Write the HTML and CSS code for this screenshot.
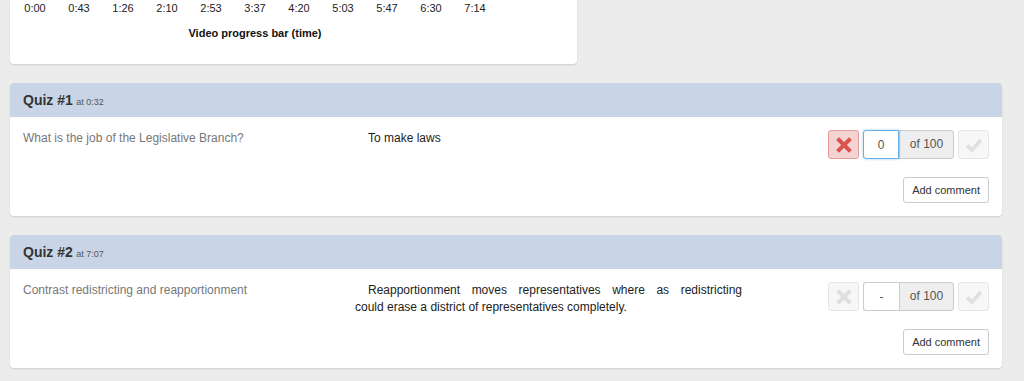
FILE: index.html
```html
<!DOCTYPE html>
<html lang="en">
<head>
    <meta charset="UTF-8">
    <title>Quiz grading</title>
    <link rel="stylesheet" href="styles.css">
</head>
<body>

    <!-- Video timeline -->
    <div class="timeline-card">
        <div class="timeline">
            <div class="ticks">
                <span>0:00</span><span>0:43</span><span>1:26</span><span>2:10</span>
                <span>2:53</span><span>3:37</span><span>4:20</span><span>5:03</span>
                <span>5:47</span><span>6:30</span><span>7:14</span>
            </div>
            <div class="timeline-label">Video progress bar (time)</div>
        </div>
    </div>

    <!-- Quiz #1 -->
    <section class="quiz">
        <div class="quiz-head"><b>Quiz #1</b> <small>at 0:32</small></div>
        <div class="quiz-body">
            <div class="question">What is the job of the Legislative Branch?</div>
            <div class="answer">
                <div class="first">To make laws</div>
            </div>
            <div class="grading">
                <div class="controls">
                    <button class="btn-icon wrong active">
                        <svg width="16" height="16" viewBox="0 0 16 16"><path d="M3 3 L13 13 M13 3 L3 13" stroke="currentColor" stroke-width="4" stroke-linecap="square"/></svg>
                    </button>
                    <div class="score">
                        <input class="focus" type="text" value="0">
                        <span class="addon">of 100</span>
                    </div>
                    <button class="btn-icon right">
                        <svg width="18" height="16" viewBox="0 0 18 16"><path d="M2 8.5 L7 13 L16 3" fill="none" stroke="currentColor" stroke-width="4"/></svg>
                    </button>
                </div>
                <button class="comment">Add comment</button>
            </div>
        </div>
    </section>

    <!-- Quiz #2 -->
    <section class="quiz">
        <div class="quiz-head"><b>Quiz #2</b> <small>at 7:07</small></div>
        <div class="quiz-body">
            <div class="question">Contrast redistricting and reapportionment</div>
            <div class="answer">
                <div class="first spread">Reapportionment moves representatives where as redistricting</div>
                <div>could erase a district of representatives completely.</div>
            </div>
            <div class="grading">
                <div class="controls">
                    <button class="btn-icon wrong">
                        <svg width="16" height="16" viewBox="0 0 16 16"><path d="M3 3 L13 13 M13 3 L3 13" stroke="currentColor" stroke-width="4" stroke-linecap="square"/></svg>
                    </button>
                    <div class="score">
                        <input type="text" value="-">
                        <span class="addon">of 100</span>
                    </div>
                    <button class="btn-icon right">
                        <svg width="18" height="16" viewBox="0 0 18 16"><path d="M2 8.5 L7 13 L16 3" fill="none" stroke="currentColor" stroke-width="4"/></svg>
                    </button>
                </div>
                <button class="comment">Add comment</button>
            </div>
        </div>
    </section>

</body>
</html>
```

FILE: styles.css
```css
body {
    font-family: "Liberation Sans", Arial, sans-serif;
    margin: 0;
    padding: 0 22px 0 10px;
    background-color: #ececec;
    color: #333;
    font-size: 12px;
}
.timeline-card {
    width: 567px;
    background-color: #fff;
    border-radius: 0 0 4px 4px;
    box-shadow: 0 1px 2px rgba(0,0,0,0.12);
    padding: 1px 0 23px 3px;
    box-sizing: border-box;
    margin-bottom: 19px;
}
.timeline {
    width: 484px;
    font-size: 11px;
}
.ticks {
    display: flex;
    color: #222;
    line-height: 15px;
}
.ticks span {
    width: 44px;
    text-align: center;
}
.timeline-label {
    text-align: center;
    font-weight: bold;
    color: #111;
    line-height: 15px;
    margin-top: 10px;
}
.quiz {
    background-color: #fff;
    border-radius: 4px;
    box-shadow: 0 1px 2px rgba(0,0,0,0.12);
    margin-bottom: 19px;
    overflow: hidden;
}
.quiz-head {
    background-color: #c9d5e6;
    height: 34px;
    line-height: 35px;
    padding: 0 13px;
    color: #333;
}
.quiz-head b {
    font-size: 14px;
}
.quiz-head small {
    font-size: 9px;
    color: #555;
}
.quiz-body {
    display: flex;
    padding: 13px 13px 13px 13px;
}
.question {
    width: 332px;
    color: #777;
    line-height: 17px;
    padding-top: 0;
}
.answer {
    width: 387px;
    color: #222;
    line-height: 17px;
    padding-top: 0;
}
.answer .first {
    text-indent: 13px;
}
.answer .spread {
    text-align: justify;
    text-align-last: justify;
}
.grading {
    flex: 1;
    display: flex;
    flex-direction: column;
    align-items: flex-end;
    gap: 18px;
}
.controls {
    display: flex;
    gap: 4px;
}
.btn-icon {
    width: 31px;
    height: 29px;
    padding: 0;
    border: 1px solid #e6e6e6;
    border-radius: 3px;
    background-color: #f7f7f7;
    color: #e0e0e0;
    display: flex;
    align-items: center;
    justify-content: center;
}
.btn-icon.wrong.active {
    background-color: #f4d3d3;
    border-color: #e79a9a;
    color: #d9534f;
}
.score {
    display: flex;
    height: 29px;
}
.score input {
    width: 36px;
    box-sizing: border-box;
    border: 1px solid #ccc;
    border-right: none;
    border-radius: 3px 0 0 3px;
    text-align: center;
    font-family: inherit;
    font-size: 12px;
    color: #555;
    padding: 0;
    margin: 0;
}
.score input.focus {
    border: 1px solid #66afe9;
    box-shadow: 0 0 3px rgba(102,175,233,0.6);
    position: relative;
}
.addon {
    width: 55px;
    box-sizing: border-box;
    background-color: #eee;
    border: 1px solid #ccc;
    border-radius: 0 3px 3px 0;
    line-height: 27px;
    text-align: center;
    color: #555;
}
.comment {
    height: 26px;
    padding: 0 8px;
    background-color: #fff;
    border: 1px solid #ccc;
    border-radius: 3px;
    font-family: inherit;
    font-size: 11px;
    color: #333;
}
```
